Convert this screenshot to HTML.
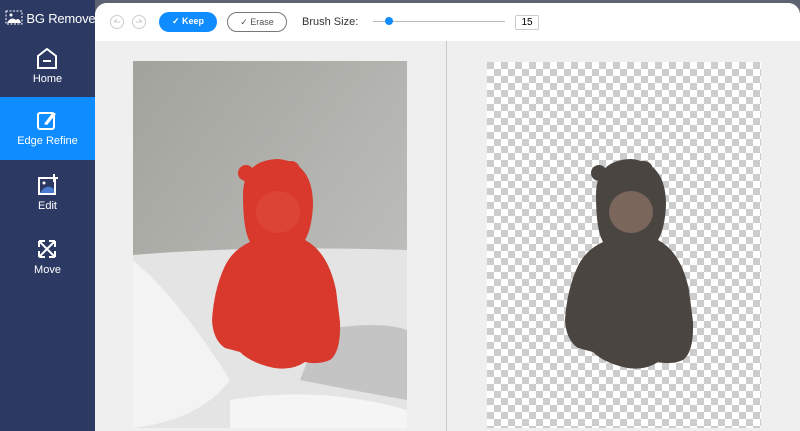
<!DOCTYPE html>
<html><head><style>
*{margin:0;padding:0;box-sizing:border-box}
body{width:800px;height:431px;overflow:hidden;background:#5d6370;font-family:"Liberation Sans",sans-serif;position:relative}
.side{position:absolute;left:0;top:0;width:95px;height:431px;background:#2c3a63;color:#fff}
.logo{position:absolute;left:5px;top:10px;font-size:13px;white-space:nowrap;letter-spacing:-0.2px}
.item{position:absolute;left:0;width:95px;height:63px;text-align:center;font-size:11px}
.item span{position:absolute;left:0;right:0;bottom:13px}
.item svg{position:absolute;left:36px;top:12px}
.main{position:absolute;left:95px;top:3px;width:705px;height:428px;background:#efefef;border-radius:12px 12px 0 0;overflow:hidden;z-index:2}
.tb{position:absolute;left:0;top:0;width:705px;height:38px;background:#fff}
.btn{position:absolute;top:9px;height:20px;border-radius:10px;font-size:9px;line-height:18px;text-align:center}
</style></head><body>
<div class="side">
 <div class="logo"><svg width="18" height="15" style="vertical-align:-2px"><rect x="1" y="1" width="16" height="13" fill="none" stroke="#fff" stroke-dasharray="2 1.5"/><path d="M2 13 Q6 6 11 10 Q14 7 16 13Z" fill="#fff"/><circle cx="6" cy="5" r="1.5" fill="#fff"/></svg> BG Remover</div>
 <div class="item" style="top:35px"><svg width="22" height="24"><path d="M2 9 L11 2 L20 9 L20 21 L2 21Z" fill="none" stroke="#fff" stroke-width="2"/><path d="M7 14 H15" stroke="#fff" stroke-width="2"/></svg><span>Home</span></div>
 <div class="item" style="top:97px;background:#0f8cff"><svg width="22" height="22"><rect x="2" y="4" width="16" height="16" rx="2" fill="none" stroke="#fff" stroke-width="2"/><path d="M8 15 L17 3 L20 5 L11 16 Z" fill="#fff"/></svg><span>Edge Refine</span></div>
 <div class="item" style="top:162px"><svg width="24" height="24"><rect x="3" y="4" width="16" height="16" fill="none" stroke="#fff" stroke-width="2"/><path d="M4 19 Q10 9 18 15 V19Z" fill="#4a7bd0"/><circle cx="8" cy="9" r="1.5" fill="#fff"/><path d="M18 0 V8 M14 4 H22" stroke="#fff" stroke-width="2"/></svg><span>Edit</span></div>
 <div class="item" style="top:226px"><svg width="22" height="22"><path d="M3 3 L19 19 M19 3 L3 19 M3 3 H9 M3 3 V9 M19 3 H13 M19 3 V9 M3 19 H9 M3 19 V13 M19 19 H13 M19 19 V13" stroke="#fff" stroke-width="2" fill="none"/></svg><span>Move</span></div>
</div>
<div class="main">
 <div class="tb">
  <svg style="position:absolute;left:14px;top:11px" width="40" height="16"><circle cx="8" cy="8" r="6.5" fill="none" stroke="#ccc"/><path d="M5 8 L8 5 M5 8 H11" stroke="#ccc"/><circle cx="30" cy="8" r="6.5" fill="none" stroke="#ccc"/><path d="M33 8 L30 5 M33 8 H27" stroke="#ccc"/></svg>
  <div class="btn" style="left:64px;width:58px;background:#0f8cff;color:#fff;font-weight:bold">✓ Keep</div>
  <div class="btn" style="left:132px;width:60px;border:1px solid #777;color:#555">✓ Erase</div>
  <div style="position:absolute;left:207px;top:13px;font-size:11px;color:#333">Brush Size:</div>
  <div style="position:absolute;left:278px;top:18px;width:132px;height:1px;background:#bbb"></div>
  <div style="position:absolute;left:290px;top:14px;width:8px;height:8px;border-radius:50%;background:#0f8cff"></div>
  <div style="position:absolute;left:420px;top:12px;width:24px;height:15px;border:1px solid #ccc;border-radius:2px;font-size:10px;text-align:center;line-height:13px">15</div>
 </div>
 <div style="position:absolute;left:351px;top:38px;width:1px;height:390px;background:#ccc"></div>
<svg style="position:absolute;left:-95px;top:-3px" width="800" height="431">
 <defs>
  <linearGradient id="wall" x1="0" y1="0" x2="1" y2="1"><stop offset="0" stop-color="#a3a39d"/><stop offset="1" stop-color="#c4c4c2"/></linearGradient>
  <pattern id="chk" x="487" y="62" width="14" height="14" patternUnits="userSpaceOnUse"><rect width="14" height="14" fill="#fff"/><rect width="7" height="7" fill="#cdcdcd"/><rect x="7" y="7" width="7" height="7" fill="#cdcdcd"/></pattern>
  <g id="baby">
   <path d="M243,195 Q243,160 278,159 Q313,162 313,205 Q312,228 305,240 Q328,252 336,290 L340,322 Q341,352 330,360 Q318,365 305,362 Q290,372 270,367 Q250,362 240,352 L225,348 Q213,340 212,320 Q214,290 224,268 Q232,250 250,242 Q243,230 243,195 Z"/>
   <circle cx="246" cy="173" r="8"/><circle cx="291" cy="170" r="9"/>
  </g>
 </defs>
 <rect x="133" y="61" width="274" height="367" fill="url(#wall)"/>
 <path d="M133 255 Q250 245 407 250 L407 428 L133 428Z" fill="#e4e4e4"/>
 <path d="M133 260 Q180 300 230 380 Q200 420 133 428Z" fill="#f3f3f3"/>
 <path d="M320 330 Q380 320 407 330 L407 400 Q350 390 300 380Z" fill="#c4c4c4"/>
 <path d="M230 400 Q320 385 407 410 L407 428 L230 428Z" fill="#f5f5f5"/>
 <use href="#baby" fill="#d8392c"/>
 <ellipse cx="278" cy="212" rx="22" ry="21" fill="#dc4536"/>
 <rect x="487" y="62" width="274" height="366" fill="url(#chk)"/>
 <use href="#baby" x="353" fill="#4a4540"/>
 <ellipse cx="631" cy="212" rx="22" ry="21" fill="#7a665a"/>
</svg>
</div>
</body></html>
